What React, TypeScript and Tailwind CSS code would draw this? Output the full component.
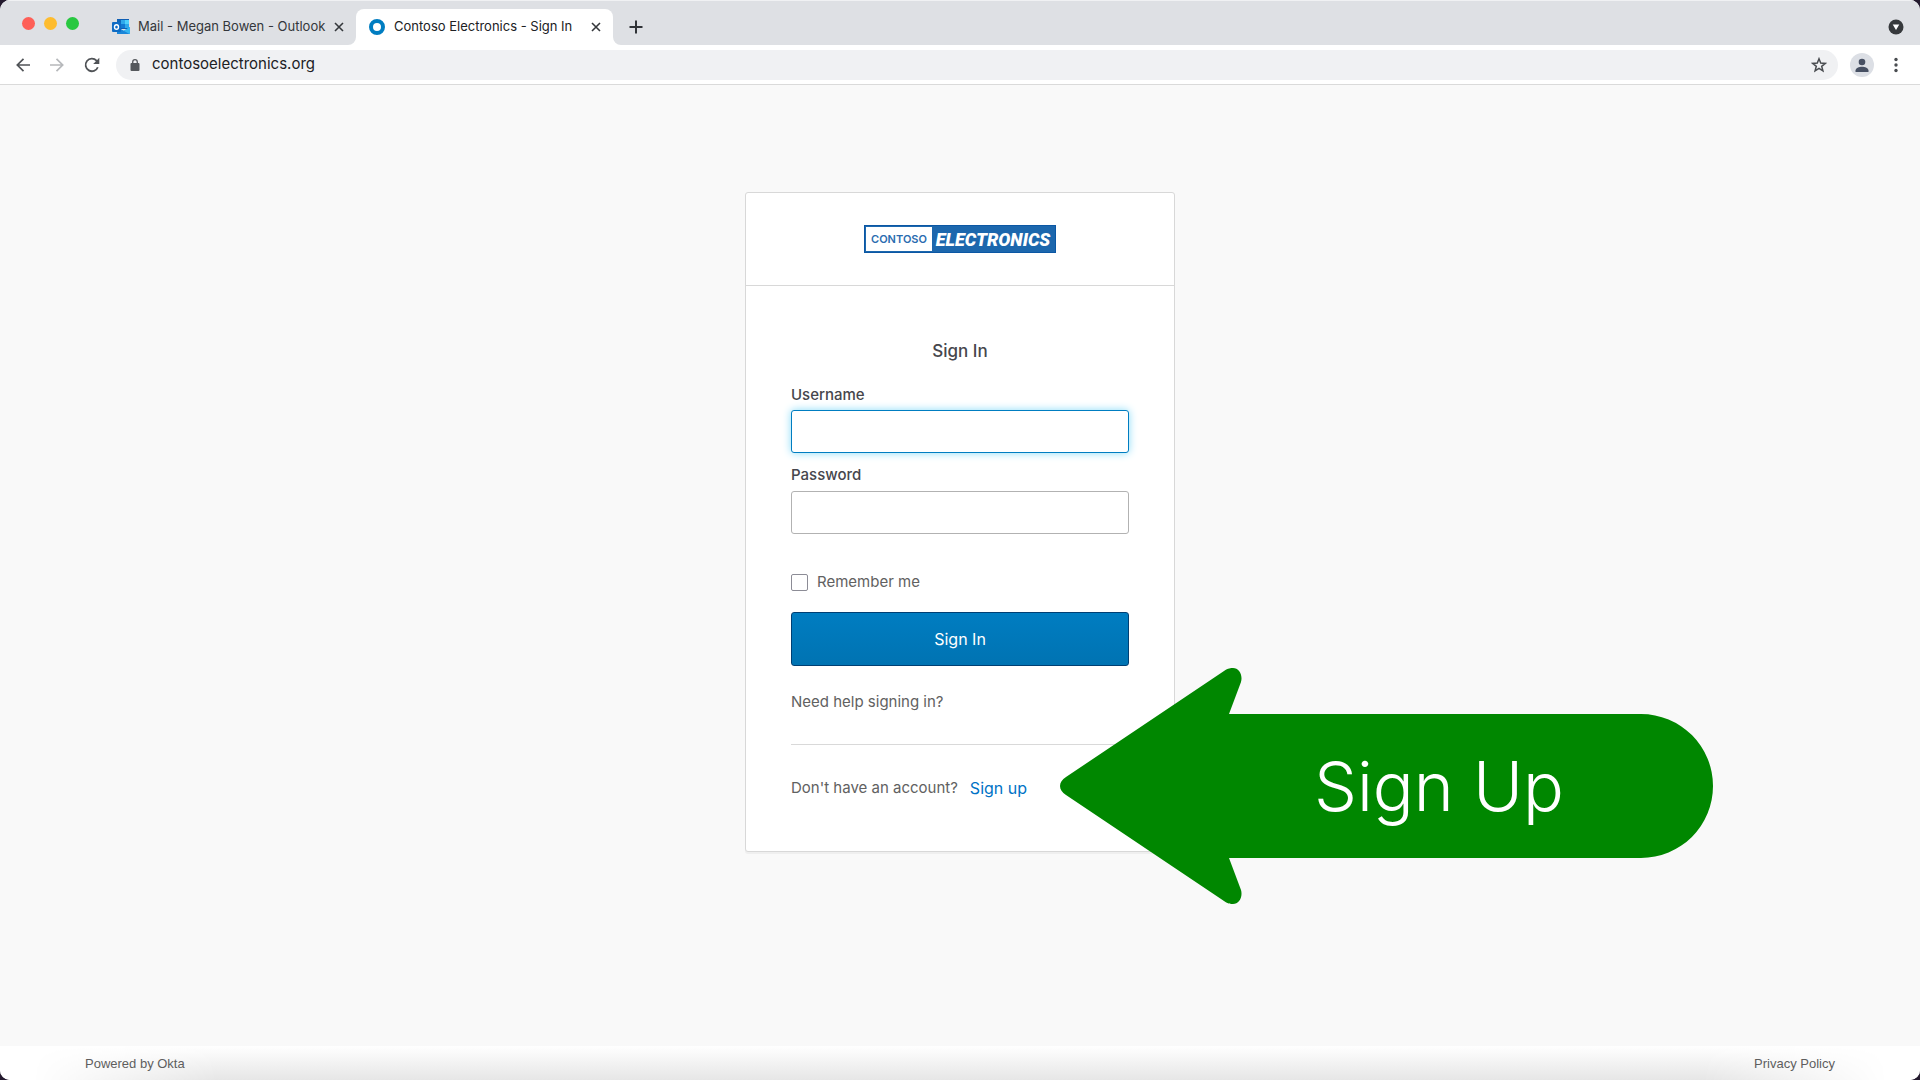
import React from 'react';

const OutlookIcon: React.FC = () => (
	<svg viewBox="0 0 18 16" className="w-[18px] h-4 shrink-0" aria-hidden="true">
		<path d="M5 0h12v10H5z" fill="#0f5fb4" />
		<path d="M5 1h4v4H5z" fill="#1067b8" />
		<path d="M9 1h4v4H9z" fill="#2fa8ea" />
		<path d="M13 1h4v4h-4z" fill="#4ed0fb" />
		<path d="M9 5h4v4H9z" fill="#1279d2" />
		<path d="M13 5h4v4h-4z" fill="#2fa8ea" />
		<path d="M5 8l6.500 4L18 8v7H5z" fill="#1b8fe0" />
		<path d="M18 8v7H6z" fill="#35b5f1" />
		<path d="M5 8l12.500 7H5z" fill="#1a86d9" />
		<rect y="3" width="9" height="10" rx="1" fill="#0f6cc4" />
		<ellipse cx="4.500" cy="8" rx="2" ry="2.300" fill="none" stroke="#fff" strokeWidth="1.400" />
	</svg>
);

const CloseIcon: React.FC = () => (
	<svg viewBox="0 0 10 10" className="w-[10px] h-[10px]" stroke="#35383c" strokeWidth="1.600" aria-hidden="true">
		<path d="M1 1l8 8M9 1l-8 8" />
	</svg>
);

const BrowserTabs: React.FC = () => (
	<div className="flex items-end h-[45px] pl-[22px] pr-4 bg-[#dee0e4] border-t border-[#f0f1f3] text-[13px] text-[#34373b]">
		<div className="flex gap-[9px] h-full items-center">
			<span className="w-[13px] h-[13px] rounded-full bg-[#fe5f57]" />
			<span className="w-[13px] h-[13px] rounded-full bg-[#febc2e]" />
			<span className="w-[13px] h-[13px] rounded-full bg-[#28c840]" />
		</div>
		<div className="flex items-center h-9 ml-[33px] w-[244px] pr-3">
			<OutlookIcon />
			<span className="ml-2 flex-1 whitespace-nowrap">Mail - Megan Bowen - Outlook</span>
			<button type="button" aria-label="Close Mail tab">
				<CloseIcon />
			</button>
		</div>
		<div className="relative flex items-center h-9 w-[257px] pl-[13px] pr-3 rounded-t-lg bg-white text-[#202124]">
			<svg viewBox="0 0 8 8" className="absolute -left-2 bottom-0 w-2 h-2" fill="#fff" aria-hidden="true">
				<path d="M8 0v8H0a8 8 0 0 0 8-8z" />
			</svg>
			<svg viewBox="0 0 16 16" className="w-4 h-4" aria-hidden="true">
				<circle cx="8" cy="8" r="6" fill="none" stroke="#007dc1" strokeWidth="4" />
			</svg>
			<span className="ml-[9px] flex-1 whitespace-nowrap">Contoso Electronics - Sign In</span>
			<button type="button" aria-label="Close Contoso tab">
				<CloseIcon />
			</button>
			<svg viewBox="0 0 8 8" className="absolute -right-2 bottom-0 w-2 h-2" fill="#fff" aria-hidden="true">
				<path d="M0 0v8h8a8 8 0 0 1-8-8z" />
			</svg>
		</div>
		<button type="button" aria-label="New tab" className="h-9 ml-4">
			<svg viewBox="0 0 14 14" className="w-[14px] h-[14px]" stroke="#303337" strokeWidth="2" aria-hidden="true">
				<path d="M7 0.500v13M0.500 7h13" />
			</svg>
		</button>
		<button type="button" aria-label="Search tabs" className="h-9 ml-auto">
			<svg viewBox="0 0 16 16" className="w-4 h-4" aria-hidden="true">
				<circle cx="8" cy="8" r="7.500" fill="#36393c" />
				<path d="M4.700 5.500h6.600L8 11z" fill="#fff" />
			</svg>
		</button>
	</div>
);

const Toolbar: React.FC = () => (
	<div className="flex items-center h-10 pl-4 pr-[22px] bg-white border-b border-[#dadada]">
		<button type="button" aria-label="Back">
			<svg viewBox="0 0 14 14" className="w-[14px] h-[14px]" fill="none" stroke="#505357" strokeWidth="1.700" aria-hidden="true">
				<path d="M14 7H1.500M7.500 0.800L1.300 7l6.200 6.200" />
			</svg>
		</button>
		<button type="button" aria-label="Forward" className="ml-5">
			<svg viewBox="0 0 14 14" className="w-[14px] h-[14px]" fill="none" stroke="#b6b8bb" strokeWidth="1.700" aria-hidden="true">
				<path d="M0 7h12.500M6.500 0.800L12.700 7l-6.200 6.200" />
			</svg>
		</button>
		<button type="button" aria-label="Reload" className="ml-5">
			<svg viewBox="0 0 16 16" className="w-4 h-4" aria-hidden="true">
				<path d="M13.800 10.200A6.300 6.300 0 1 1 12.500 3.600L14 5.300" fill="none" stroke="#505357" strokeWidth="1.800" />
				<path d="M15.300 0.800v6.200H9.200z" fill="#505357" />
			</svg>
		</button>
		<div className="flex items-center flex-1 h-[30px] ml-4 pl-[14px] pr-[11px] rounded-full bg-[#f0f1f3]">
			<svg viewBox="0 0 10 12" className="w-[10px] h-3" aria-hidden="true">
				<rect x="0.500" y="4" width="9" height="8" rx="1" fill="#55585c" />
				<path d="M2.700 5V3a2.300 2.300 0 0 1 4.600 0v2" fill="none" stroke="#55585c" strokeWidth="1.300" />
			</svg>
			<input
				type="text"
				aria-label="Address"
				defaultValue="contosoelectronics.org"
				className="flex-1 ml-3 bg-transparent outline-none text-[15px] text-[#202124]"
			/>
			<button type="button" aria-label="Bookmark this page">
				<svg viewBox="0 0 16 16" className="w-4 h-4" fill="none" stroke="#4a4d51" strokeWidth="1.500" aria-hidden="true">
					<path d="M8 1.800l1.700 4.300 4.600.3-3.600 2.900 1.200 4.500L8 11.300l-3.900 2.500 1.200-4.500L1.700 6.400l4.600-.3z" />
				</svg>
			</button>
		</div>
		<button type="button" aria-label="Profile" className="ml-3">
			<svg viewBox="0 0 24 24" className="w-6 h-6" aria-hidden="true">
				<circle cx="12" cy="12" r="12" fill="#dcdfe5" />
				<circle cx="12" cy="9" r="3.300" fill="#475063" />
				<path d="M5.500 19v-1.500c0-2.300 3.500-3.700 6.500-3.700s6.500 1.400 6.500 3.700V19z" fill="#475063" />
			</svg>
		</button>
		<button type="button" aria-label="Menu" className="ml-5">
			<svg viewBox="0 0 4 16" className="w-1 h-4" fill="#4a4d51" aria-hidden="true">
				<circle cx="2" cy="2.500" r="1.700" />
				<circle cx="2" cy="8" r="1.700" />
				<circle cx="2" cy="13.500" r="1.700" />
			</svg>
		</button>
	</div>
);

const Logo: React.FC = () => (
	<div className="flex w-[192px] h-7 p-px bg-[#1c67ad] border border-[#0b57a4] text-white">
		<span className="flex items-center justify-center w-[66px] bg-white text-[#2a6cb0] text-[11px] font-semibold">
			CONTOSO
		</span>
		<span className="flex flex-1 items-center justify-center font-['Roboto',sans-serif] text-[18px] font-black italic">
			ELECTRONICS
		</span>
	</div>
);

const SignUpArrow: React.FC = () => (
	<div className="absolute left-[314px] top-[475px] w-[653px] h-[236px] flex items-center pl-[254px]">
		<svg viewBox="0 0 653 236" className="absolute inset-0 w-full h-full" fill="#008700" aria-hidden="true">
			<path d="M6 109L164 3C168 0 171 0 173 0C179 0 183 7 181 14L169 46H581A72 72 0 0 1 581 190H169L181 222C183 229 179 236 173 236C171 236 168 236 164 233L6 127C-2 122-2 114 6 109Z" />
		</svg>
		<span className="relative text-white text-[68px] leading-none font-light whitespace-nowrap">Sign Up</span>
	</div>
);

const SignInForm: React.FC = () => (
	<form className="px-[45px] pt-[53px] pb-[53px]" onSubmit={(e) => e.preventDefault()}>
		<h2 className="text-center text-[17px] leading-6 font-medium">Sign In</h2>
		<label htmlFor="username" className="block mt-[22px] mb-[5px] text-[15px] leading-5 font-medium">
			Username
		</label>
		<input
			type="text"
			id="username"
			name="username"
			className="block w-full h-[43px] px-3 rounded-[3px] border border-[#007dc1] bg-white shadow-[0_0_8px_#88dcf8] outline-none"
		/>
		<label htmlFor="password" className="block mt-3 mb-[6px] text-[15px] leading-5 font-medium">
			Password
		</label>
		<input
			type="password"
			id="password"
			name="password"
			className="block w-full h-[43px] px-3 rounded-[3px] border border-[#b2b2b2] bg-white outline-none"
		/>
		<div className="flex items-center gap-[9px] mt-[38px] text-[15px] leading-5 text-[#616161]">
			<input
				type="checkbox"
				id="remember"
				name="remember"
				className="appearance-none w-[17px] h-[17px] rounded-[2px] border border-[#8c8c96] bg-white"
			/>
			<label htmlFor="remember">Remember me</label>
		</div>
		<button
			type="submit"
			className="block w-full h-[54px] mt-5 rounded-[3px] border border-[#003f73] bg-linear-to-b from-[#007dc1] to-[#0073b2] text-white text-base"
		>
			Sign In
		</button>
		<a href="#help" className="block mt-[26px] text-[15px] leading-5 text-[#616161]">
			Need help signing in?
		</a>
		<div className="flex items-center gap-3 mt-8 pt-[33px] border-t border-[#d9d9d9] text-[15px] leading-5 text-[#616161]">
			<span>Don't have an account?</span>
			<a href="#signup" className="text-base leading-5 text-[#0072c6]">
				Sign up
			</a>
		</div>
	</form>
);

const App: React.FC = () => {
	return (
		<div className="bg-[#241a2e] min-h-screen flex">
			<div className="flex flex-1 flex-col rounded-[10px] overflow-hidden bg-[#f9f9f9] font-['Inter',sans-serif]">
				<header>
					<BrowserTabs />
					<Toolbar />
				</header>
				<main className="flex-1 pt-[107px] pb-10">
					<div className="relative w-[430px] mx-auto rounded-[3px] border border-[#d8d8d8] bg-white text-[#46464c] shadow-[0_2px_0_rgba(175,175,175,0.12)]">
						<div className="flex justify-center py-8 border-b border-[#d8d8d8]">
							<Logo />
						</div>
						<SignInForm />
						<SignUpArrow />
					</div>
				</main>
				<footer className="relative flex items-center justify-between h-[34px] px-[85px] pt-[2px] bg-white font-['Liberation_Sans',sans-serif] text-[13px] text-[#5e5e5e]">
					<div className="absolute inset-x-8 inset-y-0 bg-linear-to-b from-white to-[#e6e6e6] mask-x-from-90% mask-x-to-100%" />
					<span className="relative">Powered by Okta</span>
					<a href="#privacy" className="relative">
						Privacy Policy
					</a>
				</footer>
			</div>
		</div>
	);
};

export default App;
